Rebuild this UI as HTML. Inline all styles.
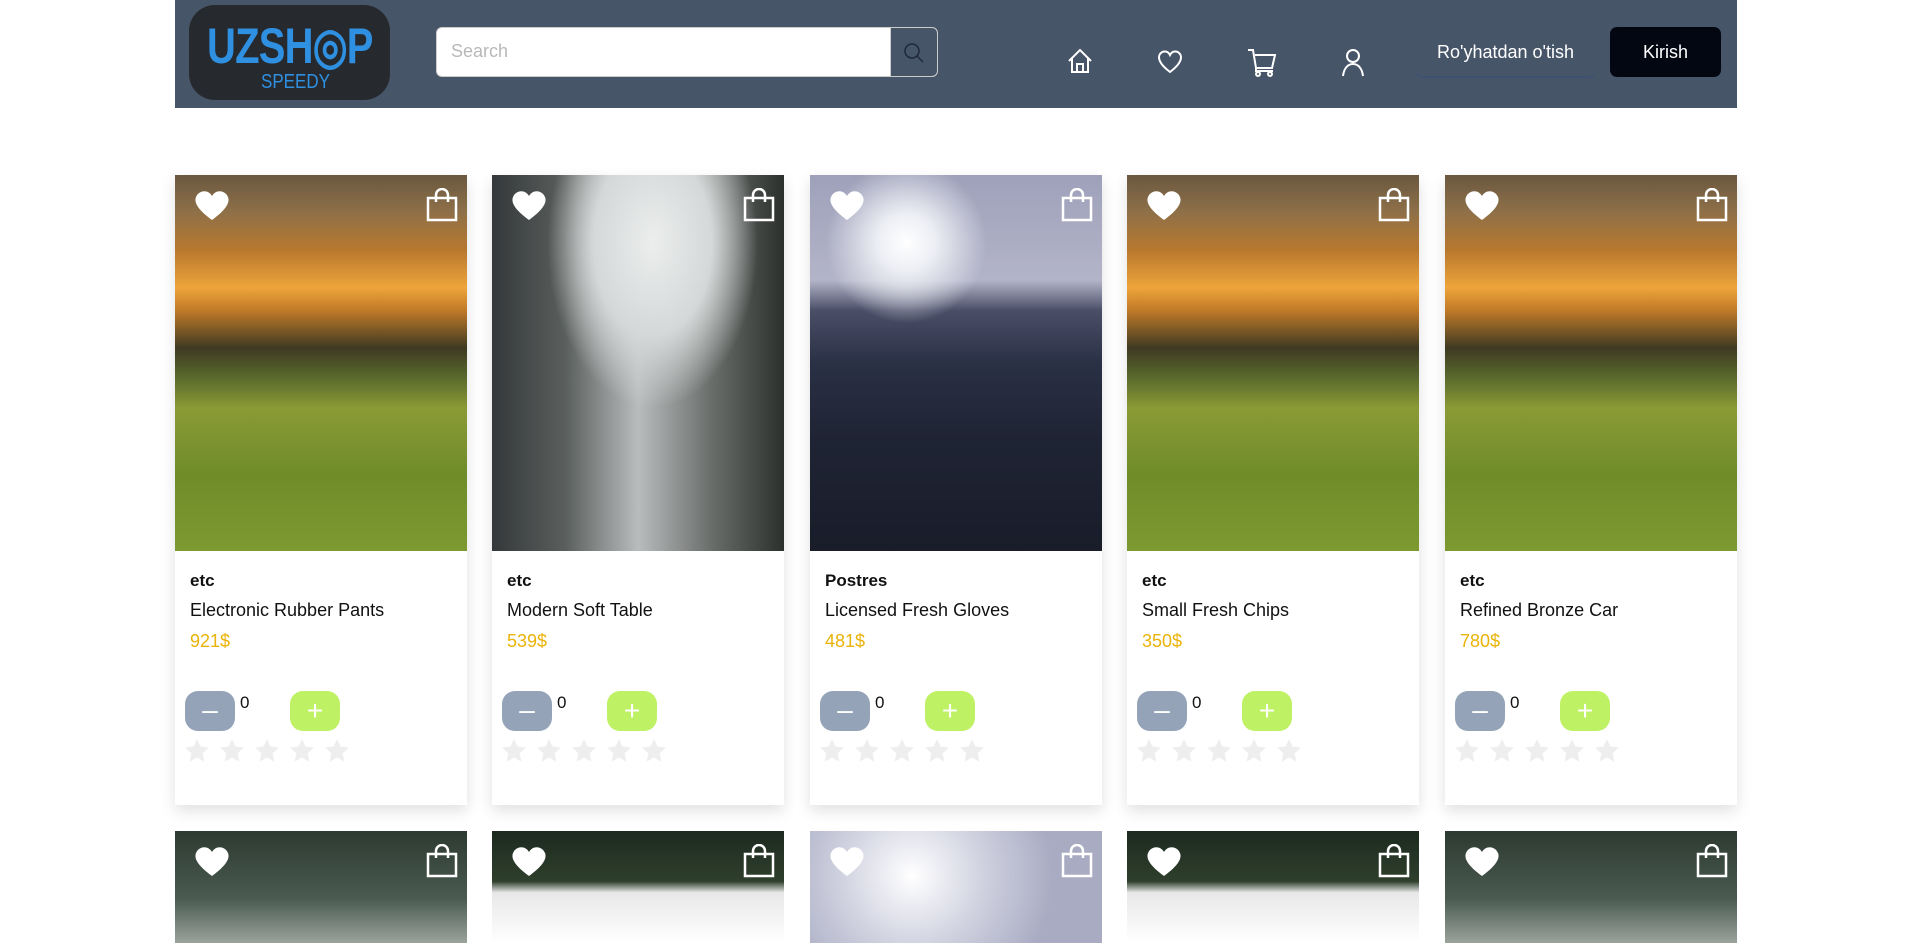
<!DOCTYPE html>
<html><head><meta charset="utf-8"><style>
*{box-sizing:border-box;margin:0;padding:0}
html{width:1910px;height:943px;overflow:hidden}
body{width:1910px;height:943px;overflow:hidden;background:#fff;font-family:"Segoe UI","Liberation Sans",sans-serif;position:relative}
.hdr{position:absolute;left:175px;top:0;width:1562px;height:108px;background:#475569}
.logo{position:absolute;left:14px;top:5px;width:201px;height:95px;border-radius:26px;background:#262a2e;overflow:hidden}
.logo .t{position:absolute;left:18px;top:12px;font:bold 50px "Liberation Sans Narrow","Liberation Sans",sans-serif;color:#2f8fe0;letter-spacing:-1px;transform:scaleX(.8);transform-origin:left}
.logo .s{position:absolute;left:72px;top:66px;font:20px "Liberation Sans Narrow","Liberation Sans",sans-serif;color:#2f8fe0;transform:scaleX(.85);transform-origin:left}
.search{position:absolute;left:261px;top:27px;width:502px;height:50px;background:#fff;border:1px solid #ccc;border-radius:6px;overflow:hidden}
.search span{position:absolute;left:14px;top:13px;font-size:18px;color:#b8b8b8}
.search .b{position:absolute;right:0;top:0;width:47px;height:50px;background:#475569;border-left:1px solid #ccc}
.ic{position:absolute;top:46px}
.reg{position:absolute;left:1240px;top:27px;width:181px;height:51px;border-bottom:2px solid #3d5270;border-radius:8px;color:#fff;font-size:18px;text-align:center;line-height:50px}
.kir{position:absolute;left:1435px;top:27px;width:111px;height:50px;background:#030712;border-radius:7px;color:#fff;font-size:18px;text-align:center;line-height:50px}
.card{position:absolute;width:292px;height:630px;background:#fff;box-shadow:0 6px 14px rgba(0,0,0,.12);overflow:hidden}
.img{position:absolute;left:0;top:0;width:292px;height:376px}
.hf{position:absolute;left:19px;top:14px}
.bag{position:absolute;right:9px;top:13px}
.cat{position:absolute;left:15px;top:396px;font-weight:bold;font-size:17px;color:#111}
.nm{position:absolute;left:15px;top:425px;font-size:18px;color:#111}
.pr{position:absolute;left:15px;top:456px;font-size:18px;color:#eab308}
.mi{position:absolute;left:10px;top:516px;width:50px;height:40px;border-radius:13px;background:#94a3b8;color:#fff;font-size:28px;text-align:center;line-height:38px}
.zero{position:absolute;left:65px;top:518px;font-size:17px;color:#111}
.pl{position:absolute;left:115px;top:516px;width:50px;height:40px;border-radius:13px;background:#bef264;color:#fff;font-size:28px;text-align:center;line-height:40px}
.st{position:absolute;left:10px;top:564px;display:flex;gap:11px}
</style></head><body>
<div class="hdr">
 <div class="logo"><div class="t">UZSH<span>◎</span>P</div><div class="s">SPEEDY</div></div>
 <div class="search"><span>Search</span><div class="b"><svg width="47" height="50" viewBox="0 0 47 50"><circle cx="21" cy="23" r="7" fill="none" stroke="#1e293b" stroke-width="1.5"/><path d="M26 28l6 6" stroke="#1e293b" stroke-width="1.5"/></svg></div></div>
 <svg class="ic" style="left:890px" width="30" height="30" viewBox="0 0 30 30" fill="none" stroke="#fff" stroke-width="2"><path d="M4 15L15 4l11 11M7 12v14h16V12M12 26v-8h6v8"/></svg>
 <svg class="ic" style="left:980px" width="30" height="30" viewBox="0 0 30 30" fill="none" stroke="#fff" stroke-width="2"><path d="M15 26C3 17 3 11 5 8c3-4 8-3 10 1 2-4 7-5 10-1 2 3 2 9-10 18z"/></svg>
 <svg class="ic" style="left:1071px" width="32" height="32" viewBox="0 0 32 32" fill="none" stroke="#fff" stroke-width="2"><path d="M2 4h5l3 18h16l3-13H9M10 22v3h17"/><circle cx="12" cy="28" r="2"/><circle cx="24" cy="28" r="2"/></svg>
 <svg class="ic" style="left:1163px" width="30" height="32" viewBox="0 0 30 32" fill="none" stroke="#fff" stroke-width="2"><circle cx="15" cy="10" r="6"/><path d="M5 30c1-8 5-12 10-12s9 4 10 12"/></svg>
 <div class="reg">Ro'yhatdan o'tish</div>
 <div class="kir">Kirish</div>
</div>
<div id="cards"></div>
<script>
const sun="linear-gradient(180deg,#6a5840 0%,#8f7048 10%,#b8782e 20%,#eea43a 30%,#c07a28 36%,#3e3a22 46%,#5a6a2c 54%,#8a9a35 62%,#6f8c2a 80%,#7d9a30 100%)";
const fog="radial-gradient(ellipse 45% 55% at 55% 18%,#eceeee 0%,#d5d8d8 45%,transparent 80%),linear-gradient(90deg,#34383a 0%,#5a5f5d 25%,#b9bcbd 50%,#6a6e6b 75%,#2c302d 100%)";
const sea="radial-gradient(circle at 33% 18%,#fff 0%,#eceef4 8%,transparent 22%),linear-gradient(180deg,#9fa1bb 0%,#b3b4c8 28%,#4a4f68 36%,#2a3045 50%,#1f2434 70%,#191d2a 100%)";
const imgs=[sun,fog,sea,sun,sun];
const cats=["etc","etc","Postres","etc","etc"];
const names=["Electronic Rubber Pants","Modern Soft Table","Licensed Fresh Gloves","Small Fresh Chips","Refined Bronze Car"];
const prices=["921$","539$","481$","350$","780$"];
const r2=["linear-gradient(180deg,#2d3a31 0%,#4a5a50 60%,#9aa39c 100%)","linear-gradient(180deg,#1c2a1f 0%,#2f3f2c 45%,#e8e8e8 55%,#fff 100%)","radial-gradient(circle at 35% 40%,#fff 0%,#d0d2e0 35%,#a9abc3 70%)","linear-gradient(180deg,#1c2a1f 0%,#2f3f2c 45%,#e8e8e8 55%,#fff 100%)","linear-gradient(180deg,#2d3a31 0%,#4a5a50 60%,#9aa39c 100%)"];
const xs=[175,492,810,1127,1445];
const heart='<svg width="36" height="32" viewBox="0 0 36 32"><path d="M18 31C3 20 0 13 2 8 5 1 14 0 18 7c4-7 13-6 16 1 2 5-1 12-16 23z" fill="#fff"/></svg>';
const bag='<svg width="32" height="34" viewBox="0 0 32 34" fill="none" stroke="#fff" stroke-width="2.5"><rect x="2" y="10" width="28" height="22"/><path d="M10 14V7a6 6 0 0112 0v7"/></svg>';
const star='<svg width="24" height="23" viewBox="0 0 24 23"><path d="M12 0l3.5 7.5 8.5 1-6.3 5.8 1.7 8.5L12 18.5 4.6 22.8l1.7-8.5L0 8.5l8.5-1z" fill="#eeeeee"/></svg>';
let h="";
for(let i=0;i<5;i++){
 h+=`<div class="card" style="left:${xs[i]}px;top:175px"><div class="img" style="background:${imgs[i]}"></div><div class="hf">${heart}</div><div class="bag">${bag}</div><div class="cat">${cats[i]}</div><div class="nm">${names[i]}</div><div class="pr">${prices[i]}</div><div class="mi">–</div><div class="zero">0</div><div class="pl">+</div><div class="st">${star.repeat(5)}</div></div>`;
 h+=`<div class="card" style="left:${xs[i]}px;top:831px;height:112px;box-shadow:none"><div class="img" style="height:112px;background:${r2[i]}"></div><div class="hf">${heart}</div><div class="bag">${bag}</div></div>`;
}
document.getElementById("cards").innerHTML=h;
</script>
</body></html>
